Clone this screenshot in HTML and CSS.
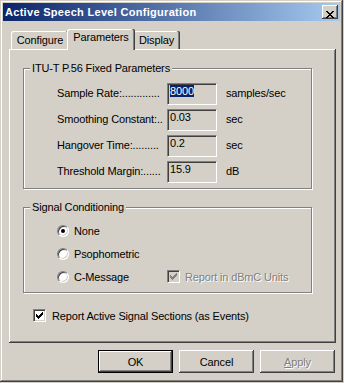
FILE: index.html
```html
<!DOCTYPE html>
<html lang="en">
<head>
  <meta charset="UTF-8">
  <title>Active Speech Level Configuration</title>
  <link rel="stylesheet" href="styles.css">
</head>
<body>

  <div class="window">
    <div class="title-bar">
      <span class="title">Active Speech Level Configuration</span>
      <button class="close-btn">
        <svg width="8" height="7" viewBox="0 0 8 7"><path d="M0 0h2v1H0zM6 0h2v1H6zM1 1h2v1H1zM5 1h2v1H5zM2 2h4v1H2zM3 3h2v1H3zM2 4h4v1H2zM1 5h2v1H1zM5 5h2v1H5zM0 6h2v1H0zM6 6h2v1H6z" fill="#000"/></svg>
      </button>
    </div>

    <div class="dialog">
      <div class="tabs">
        <div class="tab tab-configure">Configure</div>
        <div class="tab tab-params active">Parameters</div>
        <div class="tab tab-display">Display</div>
      </div>

      <div class="panel">
        <fieldset class="group group-params">
          <legend>ITU-T P.56 Fixed Parameters</legend>
          <div class="group-body">
            <div class="param-row">
              <span class="param-label">Sample Rate:.............</span>
              <span class="field"><span class="selected">8000</span></span>
              <span class="unit">samples/sec</span>
            </div>
            <div class="param-row">
              <span class="param-label">Smoothing Constant:..</span>
              <span class="field">0.03</span>
              <span class="unit">sec</span>
            </div>
            <div class="param-row">
              <span class="param-label">Hangover Time:.........</span>
              <span class="field">0.2</span>
              <span class="unit">sec</span>
            </div>
            <div class="param-row">
              <span class="param-label">Threshold Margin:......</span>
              <span class="field">15.9</span>
              <span class="unit">dB</span>
            </div>
          </div>
        </fieldset>

        <fieldset class="group group-signal">
          <legend>Signal Conditioning</legend>
          <div class="group-body">
            <div class="option-row">
              <span class="option"><span class="radio checked"></span>None</span>
            </div>
            <div class="option-row">
              <span class="option"><span class="radio"></span>Psophometric</span>
            </div>
            <div class="option-row">
              <span class="option"><span class="radio"></span>C-Message</span>
              <span class="check-item disabled">
                <span class="checkbox">
                  <svg width="7" height="7" viewBox="0 0 7 7"><path d="M0 2h1v3H0zM1 3h1v3H1zM2 4h1v3H2zM3 3h1v3H3zM4 2h1v3H4zM5 1h1v3H5zM6 0h1v3H6z" fill="#808080"/></svg>
                </span>
                Report in dBmC Units
              </span>
            </div>
          </div>
        </fieldset>

        <div class="report-row">
          <span class="checkbox">
            <svg width="7" height="7" viewBox="0 0 7 7"><path d="M0 2h1v3H0zM1 3h1v3H1zM2 4h1v3H2zM3 3h1v3H3zM4 2h1v3H4zM5 1h1v3H5zM6 0h1v3H6z" fill="#000"/></svg>
          </span>
          Report Active Signal Sections (as Events)
        </div>
      </div>

      <div class="buttons">
        <button class="btn default">OK</button>
        <button class="btn">Cancel</button>
        <button class="btn" disabled><u>A</u>pply</button>
      </div>
    </div>
  </div>

</body>
</html>
```

FILE: styles.css
```css
body {
  margin: 0;
  background: #d4d0c8;
  font-family: "Liberation Sans", Arial, sans-serif;
  font-size: 11px;
  letter-spacing: -0.15px;
  color: #000;
}

.window {
  width: 343px;
  height: 382px;
  box-sizing: border-box;
  padding: 3px;
  box-shadow: inset -1px -1px #404040, inset 1px 1px #d4d0c8, inset -2px -2px #808080, inset 2px 2px #fff;
}

.title-bar {
  height: 18px;
  display: flex;
  align-items: center;
  justify-content: space-between;
  padding: 0 2px;
  background: linear-gradient(to right, #0a246a, #a6caf0);
}

.title {
  color: #fff;
  font-weight: bold;
  font-size: 11px;
  letter-spacing: 0.3px;
}

.close-btn {
  width: 16px;
  height: 14px;
  padding: 0;
  border: none;
  background: #d4d0c8;
  box-shadow: inset -1px -1px #404040, inset 1px 1px #fff, inset -2px -2px #808080, inset 2px 2px #d4d0c8;
  display: block;
}

.close-btn svg {
  display: block;
  margin: 4px 0 0 4px;
}

.dialog {
  padding: 8px 4px 0 6px;
}

.tabs {
  display: flex;
  align-items: flex-end;
  height: 20px;
  padding-left: 2px;
}

.tab {
  height: 18px;
  box-sizing: border-box;
  padding-top: 3px;
  line-height: 13px;
  text-align: center;
  border-radius: 2px 2px 0 0;
  box-shadow: inset -1px 0 #404040, inset -2px 0 #808080, inset 1px 1px #fff;
}

.tab-configure {
  width: 58px;
}

.tab-params {
  width: 64px;
}

.tab-display {
  width: 47px;
}

.tab.active {
  width: 68px;
  height: 21px;
  margin: 0 -2px -1px;
  padding-top: 2px;
  position: relative;
  z-index: 1;
  background: #d4d0c8;
}

.panel {
  height: 294px;
  box-sizing: border-box;
  padding: 13px 0 0 14px;
  box-shadow: inset -1px -1px #404040, inset 1px 1px #fff, inset -2px -2px #808080;
}

.group {
  width: 289px;
  box-sizing: border-box;
  margin: 0;
  padding: 0;
  min-inline-size: 0;
  border: 1px solid #808080;
  box-shadow: 1px 1px 0 #fff, inset 1px 1px 0 #fff;
}

.group legend {
  margin-left: 6px;
  padding: 0 2px;
  line-height: 13px;
  background: #d4d0c8;
}

.group-params .group-body {
  display: flex;
  flex-direction: column;
  gap: 4px;
  padding: 8px 0 5px 33px;
}

.param-row {
  display: flex;
  height: 22px;
}

.param-label {
  width: 110px;
  padding-top: 4px;
  line-height: 13px;
  white-space: nowrap;
  overflow: hidden;
}

.field {
  width: 50px;
  height: 22px;
  box-sizing: border-box;
  padding: 1px 0 0 2px;
  line-height: 13px;
  border: 1px solid;
  border-color: #808080 #fff #fff #808080;
  box-shadow: inset 1px 1px #404040, inset -1px -1px #d4d0c8;
}

.selected {
  background: #0a246a;
  color: #fff;
}

.unit {
  margin-left: 9px;
  padding-top: 4px;
  line-height: 13px;
}

.group-signal {
  margin-top: 12px;
}

.group-signal .group-body {
  padding: 5px 0 4px 33px;
}

.option-row {
  display: flex;
  align-items: center;
  height: 23px;
}

.option {
  width: 110px;
  display: flex;
  align-items: center;
  gap: 5px;
}

.radio {
  width: 12px;
  height: 12px;
  box-sizing: border-box;
  border-radius: 50%;
  border: 1px solid;
  border-color: #808080 #fff #fff #808080;
  box-shadow: inset 1px 1px #404040, inset -1px -1px #d4d0c8;
  background: #fff;
  display: flex;
  align-items: center;
  justify-content: center;
}

.radio.checked::after {
  content: "";
  width: 4px;
  height: 4px;
  border-radius: 50%;
  background: #000;
}

.check-item {
  display: flex;
  align-items: center;
  gap: 5px;
}

.checkbox {
  width: 13px;
  height: 13px;
  box-sizing: border-box;
  border: 1px solid;
  border-color: #808080 #fff #fff #808080;
  box-shadow: inset 1px 1px #404040, inset -1px -1px #d4d0c8;
  background: #fff;
  display: flex;
  align-items: center;
  justify-content: center;
}

.disabled {
  color: #808080;
  text-shadow: 1px 1px 0 #fff;
}

.disabled .checkbox {
  background: #d4d0c8;
}

.report-row {
  display: flex;
  align-items: center;
  gap: 6px;
  height: 13px;
  margin: 16px 0 0 10px;
}

.buttons {
  display: flex;
  justify-content: flex-end;
  gap: 6px;
  margin-top: 7px;
  padding-right: 1px;
}

.btn {
  width: 75px;
  height: 23px;
  padding: 0;
  border: none;
  background: #d4d0c8;
  font-family: inherit;
  font-size: 11px;
  letter-spacing: inherit;
  color: #000;
  box-shadow: inset -1px -1px #404040, inset 1px 1px #fff, inset -2px -2px #808080, inset 2px 2px #d4d0c8;
}

.btn.default {
  box-shadow: inset 0 0 0 1px #000, inset -2px -2px #404040, inset 2px 2px #fff, inset -3px -3px #808080;
}

.btn:disabled {
  color: #808080;
  text-shadow: 1px 1px 0 #fff;
}
```
